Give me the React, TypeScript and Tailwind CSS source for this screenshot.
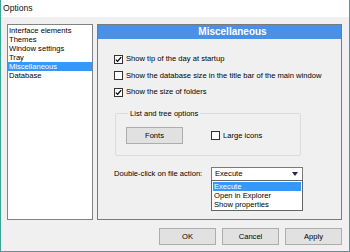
import type { ReactNode } from 'react'

const sections = ['Interface elements', 'Themes', 'Window settings', 'Tray', 'Miscellaneous', 'Database']

function Check({ checked, children }: { checked?: boolean; children: ReactNode }) {
  return (
    <div className="flex items-center h-[16.5px]">
      <span className="w-[9px] h-[9px] border border-[#333] bg-white flex items-center justify-center shrink-0">
        {checked && (
          <svg width="7" height="7" viewBox="0 0 7 7">
            <path d="M0.8 3.6 L2.6 5.4 L6.2 1.2" stroke="#000" strokeWidth="1.3" fill="none" />
          </svg>
        )}
      </span>
      <span className="ml-[3px]">{children}</span>
    </div>
  )
}

function Btn({ children, className = '' }: { children: ReactNode; className?: string }) {
  return (
    <button className={`h-[17px] w-[57px] bg-[#e1e1e1] border border-[#adadad] flex items-center justify-center ${className}`}>
      {children}
    </button>
  )
}

export default function App() {
  return (
    <div className="w-[350px] h-[252px] bg-[#f0f0f0] border-x border-b border-[#3da597] flex flex-col font-['Liberation_Sans',Arial,sans-serif] text-[7.6px] text-black leading-none overflow-hidden">
      {/* Title bar */}
      <div className="h-[17px] bg-white flex items-center pl-[2px] text-[8.6px] text-[#111]">Options</div>

      <div className="flex pt-[7px] pl-[6px] pr-[7px]">
        {/* Section list */}
        <div className="w-[86px] h-[196px] bg-white border border-[#828282] pt-[0.5px]">
          {sections.map(s => (
            <div
              key={s}
              className={`h-[9.2px] leading-[9.2px] pl-[1px] ${s === 'Miscellaneous' ? 'bg-[#3399ff] text-white' : ''}`}
            >
              {s}
            </div>
          ))}
        </div>

        {/* Page */}
        <div className="ml-[4px] w-[245px] h-[196px] border border-[#7a7a7a] flex flex-col">
          <div className="h-[14px] bg-[#4a90e6] text-white font-bold text-[10px] flex items-center justify-center pl-[26px]">
            Miscellaneous
          </div>

          <div className="pl-[16px] pt-[12px] flex flex-col">
            <Check checked>Show tip of the day at startup</Check>
            <Check>Show the database size in the title bar of the main window</Check>
            <Check checked>Show the size of folders</Check>

            <fieldset className="mt-[8px] ml-[1px] w-[186px] border border-[#dcdcdc] rounded-[2px] pl-[10px] pb-[11px]">
              <legend className="ml-[2px] px-[2px] h-[9px] leading-[9px]">List and tree options</legend>
              <div className="flex items-center mt-[9.5px]">
                <Btn>Fonts</Btn>
                <div className="ml-[28px]">
                  <Check>Large icons</Check>
                </div>
              </div>
            </fieldset>

            <div className="flex items-center mt-[11px]">
              <span className="w-[97px]">Double-click on file action:</span>
              <div className="relative w-[92px] h-[14px] border border-[#7a7a7a] bg-white flex items-center pl-[3px]">
                <span>Execute</span>
                <svg className="ml-auto mr-[4px]" width="6" height="4" viewBox="0 0 6 4">
                  <path d="M0 0 H6 L3 4 Z" fill="#1e2a4a" />
                </svg>
                <div className="absolute left-[-1px] top-[12px] w-[92px] h-[31px] bg-white border border-[#646464] pt-[1px] px-[1px]">
                  <div className="h-[9px] leading-[9px] bg-[#3399ff] text-white pl-[1px]">Execute</div>
                  <div className="h-[9px] leading-[9px] pl-[1px]">Open in Explorer</div>
                  <div className="h-[9px] leading-[9px] pl-[1px]">Show properties</div>
                </div>
              </div>
            </div>
          </div>
        </div>
      </div>

      {/* Buttons */}
      <div className="flex justify-end gap-[6px] pr-[7px] mt-[8px]">
        <Btn>OK</Btn>
        <Btn>Cancel</Btn>
        <Btn>Apply</Btn>
      </div>
    </div>
  )
}
